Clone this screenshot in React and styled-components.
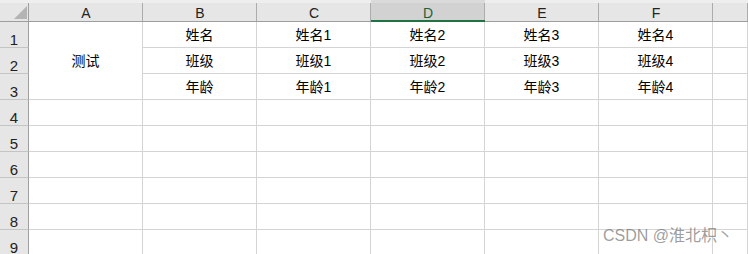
import React from 'react'
import styled, { createGlobalStyle } from 'styled-components'

const Global = createGlobalStyle`
  *{box-sizing:border-box}
  html,body{margin:0;background:#fff}
  body{font-family:"Liberation Sans","Noto Sans CJK SC",sans-serif;color:#000}
`

const Sheet = styled.div`
  position:relative;
  width:748px; height:254px; overflow:hidden;
  display:grid;
  grid-template-columns:29px repeat(6, 114px) 1fr;
  grid-template-rows:22px repeat(9, 26px);
`

const HeaderCell = styled.div`
  display:flex; align-items:center; justify-content:center;
  padding-top:5px;
  font-size:14px; line-height:14px;
  color:${p => p.$selected ? '#1f5f37' : '#222'};
  background:
    linear-gradient(#acacac, #acacac) right bottom / 1px calc(100% - 3px) no-repeat,
    linear-gradient(${p => p.$selected ? '#dadada 0 3px, #d2d2d2 3px' : '#eeeeee 0 3px, #e6e6e6 3px'});
  border-bottom:${p => p.$selected ? '2px solid #217346' : '1px solid #9e9e9e'};
`

const Corner = styled(HeaderCell)`
  justify-content:flex-end; align-items:flex-end;
  padding:0 2px 2px 0;
  background:
    linear-gradient(#9e9e9e, #9e9e9e) right bottom / 1px calc(100% - 3px) no-repeat,
    linear-gradient(#eeeeee 0 3px, #e6e6e6 3px);
  svg{display:block}
`

const RowHeader = styled.div`
  display:flex; align-items:flex-end; justify-content:center;
  font-size:15px; line-height:15px;
  color:#222;
  background:#e6e6e6;
  border-right:1px solid #9e9e9e;
  border-bottom:1px solid #c4c4c4;
`

const Cell = styled.div`
  display:flex; align-items:center; justify-content:center;
  font-size:14px; line-height:1;
  border-right:1px solid #d4d4d4;
  border-bottom:1px solid #d4d4d4;
  grid-row:${p => p.$rows ? `span ${p.$rows}` : 'auto'};
`

const Watermark = styled.div`
  position:absolute; left:603px; top:227px;
  font-size:16px; line-height:18px;
  color:rgba(90,90,90,.6);
  white-space:nowrap;
`

const cols = ['A', 'B', 'C', 'D', 'E', 'F', '']
const labels = ['姓名', '班级', '年龄']

export default function App(){
  const body = []
  for (let r = 1; r <= 9; r++) {
    body.push(<RowHeader key={'h' + r}>{r}</RowHeader>)
    if (r === 1) body.push(<Cell key="merged" $rows={3}>测试</Cell>)
    if (r > 3) body.push(<Cell key={'a' + r} />)
    for (let c = 1; c <= 6; c++) {
      const text = r <= 3 && c <= 5 ? labels[r - 1] + (c === 1 ? '' : c - 1) : ''
      body.push(<Cell key={r + '-' + c}>{text}</Cell>)
    }
  }

  return (
    <>
      <Global />
      <Sheet>
        <Corner>
          <svg width="13" height="13" viewBox="0 0 13 13"><polygon points="13,0 13,13 0,13" fill="#b4b4b4" /></svg>
        </Corner>
        {cols.map(c => <HeaderCell key={c || 'x'} $selected={c === 'D'}>{c}</HeaderCell>)}
        {body}
        <Watermark>CSDN @淮北枳丶</Watermark>
      </Sheet>
    </>
  )
}
